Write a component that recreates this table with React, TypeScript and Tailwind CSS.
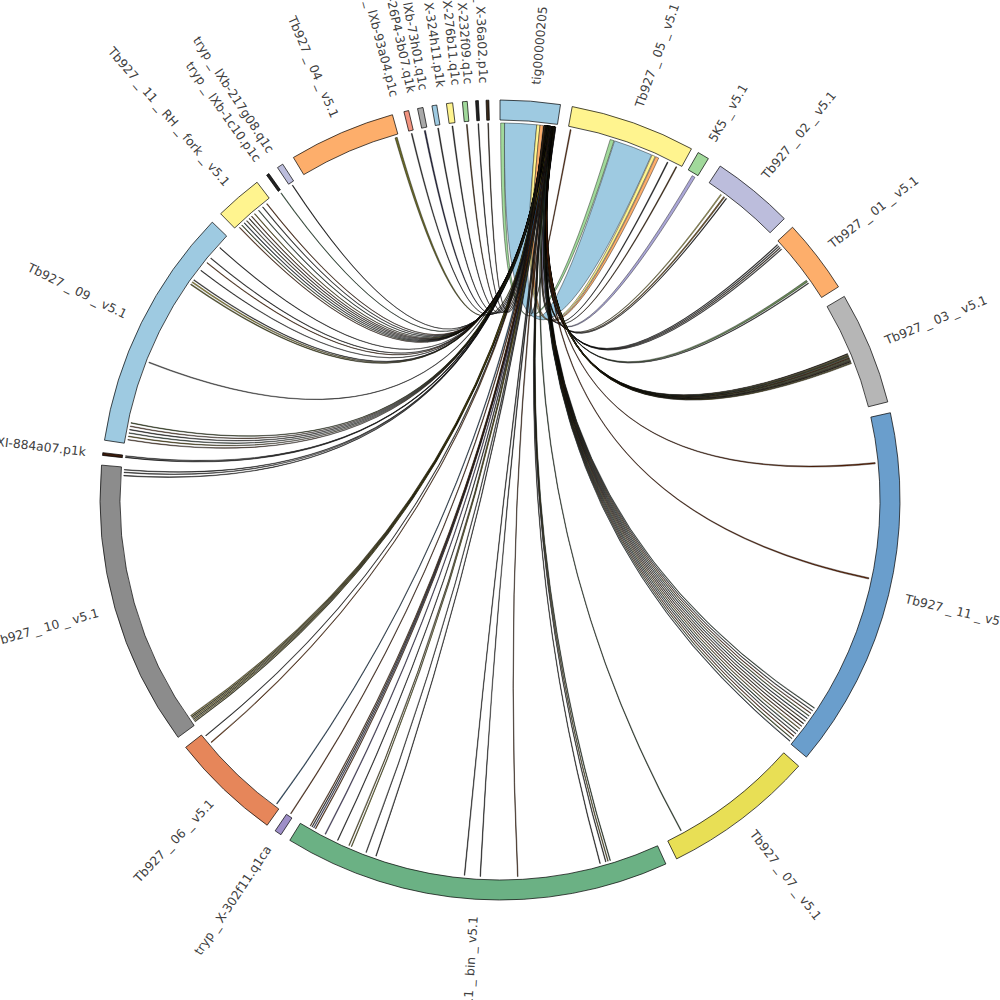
import React from "react";

const CX = 500;
const CY = 500;
const RI = 380;
const RO = 400;
const RL = 377;
const RT = 417;

const rad = (d: number) => (d * Math.PI) / 180;
const pt = (a: number, r: number): string => {
  const x = CX + r * Math.sin(rad(a));
  const y = CY - r * Math.cos(rad(a));
  return `${x.toFixed(2)},${y.toFixed(2)}`;
};

function sector(a1: number, a2: number): string {
  const large = a2 - a1 > 180 ? 1 : 0;
  return `M${pt(a1, RO)} A${RO},${RO} 0 ${large} 1 ${pt(a2, RO)} L${pt(a2, RI)} A${RI},${RI} 0 ${large} 0 ${pt(a1, RI)} Z`;
}

function ribbon(a1: number, a2: number, b1: number, b2: number): string {
  return `M${pt(a1, RL)} A${RL},${RL} 0 0 1 ${pt(a2, RL)} Q${CX},${CY} ${pt(b1, RL)} A${RL},${RL} 0 0 1 ${pt(b2, RL)} Q${CX},${CY} ${pt(a1, RL)} Z`;
}

type Seg = { n: string; a: [number, number]; c: string; la?: number };

const segs: Seg[] = [
  { n: "tig00000205", a: [0, 8.7], c: "#9ecae1", la: 5.0 },
  { n: "Tb927 _ 05 _ v5.1", a: [10.4, 28.6], c: "#fff48f" },
  { n: "5K5 _ v5.1", a: [29.7, 31.4], c: "#a1d99b" },
  { n: "Tb927 _ 02 _ v5.1", a: [33.4, 45.3], c: "#bcbddc" },
  { n: "Tb927 _ 01 _ v5.1", a: [47.0, 57.8], c: "#fdae6b" },
  { n: "Tb927 _ 03 _ v5.1", a: [59.4, 75.8], c: "#b6b6b6" },
  { n: "Tb927 _ 11 _ v5.1", a: [77.4, 130.0], c: "#6a9ecc" },
  { n: "Tb927 _ 07 _ v5.1", a: [131.7, 153.8], c: "#e8df55" },
  { n: "Tb927 _ 11 _ bin _ v5.1", a: [155.5, 211.7], c: "#6bb184" },
  { n: "tryp _ X-302f11.q1ca", a: [213.2, 214.2], c: "#9e8fc8" },
  { n: "Tb927 _ 06 _ v5.1", a: [215.6, 231.8], c: "#e6865a" },
  { n: "Tb927 _ 10 _ v5.1", a: [233.6, 275.0], c: "#8c8c8c" },
  { n: "tryp _ XI-884a07.p1k", a: [276.4, 276.8], c: "#3a1a0a" },
  { n: "Tb927 _ 09 _ v5.1", a: [278.6, 314.0], c: "#9ecae1" },
  { n: "Tb927 _ 11 _ RH _ fork _ v5.1", a: [315.7, 322.6], c: "#fff48f" },
  { n: "tryp _ lXb-1c10.p1c", a: [324.3, 324.7], c: "#222222" },
  { n: "tryp _ lXb-217g08.q1c", a: [326.2, 327.1], c: "#bcbddc" },
  { n: "Tb927 _ 04 _ v5.1", a: [328.9, 344.4], c: "#fdae6b" },
  { n: "tryp _ lXb-93a04.p1c", a: [346.1, 346.8], c: "#f29480", la: 345.3 },
  { n: "tryp _ X-26P4-3b07.q1k", a: [348.1, 348.9], c: "#a8a8a8", la: 347.7 },
  { n: "tryp _ lXb-73h01.q1c", a: [350.2, 350.9], c: "#9ecae1", la: 349.4 },
  { n: "tryp _ X-324h11.p1k", a: [352.3, 353.2], c: "#fff48f", la: 351.8 },
  { n: "tryp _ X-276b11.q1c", a: [354.6, 355.3], c: "#a1d99b", la: 353.9 },
  { n: "tryp _ X-232f09.q1c", a: [356.5, 356.9], c: "#222222", la: 355.6 },
  { n: "tryp _ X-36a02.p1c", a: [358.0, 358.4], c: "#3a2a1a", la: 357.7 },
];

const pal = ["#3a2a1a", "#6b3a1a", "#8a7a2a", "#2e4e3a", "#4a4a4a", "#7a3a14", "#556b2f", "#2a3a4a", "#5a4a2a"];

const thin: [number, number, string][] = [
  [10.8, 0.15, "#7a3a14"],
  [26.4, 0.15, "#333333"],
  [27.9, 0.15, "#5a3a1a"],
  [30.9, 0.5, "#aaa6d6"],
  [35.9, 0.15, "#c4bc6a"],
  [36.5, 0.2, "#7a5a2a"],
  [36.9, 0.12, "#2a2a2a"],
  [47.4, 0.12, "#2a2a2a"],
  [47.7, 0.12, "#3a3a3a"],
  [48.0, 0.12, "#4a3a2a"],
  [48.3, 0.12, "#555555"],
  [54.5, 0.3, "#6b8e5a"],
  [54.9, 0.12, "#333333"],
  [84.4, 0.2, "#6b2a0a"],
  [102.0, 0.2, "#6b2a0a"],
  [151.3, 0.12, "#3d5a3d"],
  [163.0, 0.1, "#2e4e2e"],
  [163.35, 0.1, "#8a7a2a"],
  [163.7, 0.1, "#333333"],
  [164.6, 0.1, "#2a2a2a"],
  [177.3, 0.1, "#6b3a1a"],
  [183.0, 0.1, "#2a2a2a"],
  [185.4, 0.1, "#333333"],
  [199.2, 0.1, "#333333"],
  [200.8, 0.1, "#555555"],
  [203.2, 0.1, "#8a8a2a"],
  [203.6, 0.1, "#8a7a2a"],
  [205.5, 0.1, "#333333"],
  [207.6, 0.12, "#6a5a9a"],
  [209.3, 0.1, "#8b4513"],
  [209.6, 0.1, "#5a5a9a"],
  [209.9, 0.1, "#333333"],
  [210.2, 0.1, "#8b4513"],
  [213.7, 0.12, "#7a3a14"],
  [216.3, 0.12, "#2f5f8a"],
  [230.0, 0.12, "#8b4513"],
  [231.3, 0.1, "#333333"],
  [273.7, 0.1, "#333333"],
  [274.2, 0.1, "#555555"],
  [274.6, 0.1, "#2a2a2a"],
  [276.5, 0.1, "#333333"],
  [276.7, 0.1, "#2a2a2a"],
  [291.4, 0.12, "#777777"],
  [304.9, 0.15, "#6b6b2a"],
  [305.3, 0.15, "#b8a830"],
  [305.7, 0.12, "#333333"],
  [307.5, 0.1, "#333333"],
  [309.0, 0.1, "#8b4513"],
  [309.9, 0.1, "#333333"],
  [312.0, 0.1, "#2a2a2a"],
  [324.5, 0.1, "#2e6e3e"],
  [326.6, 0.1, "#2a2a2a"],
  [344.0, 0.35, "#6b6b2a"],
  [346.45, 0.15, "#333333"],
  [348.5, 0.2, "#2a2a4a"],
  [350.55, 0.15, "#333333"],
  [352.75, 0.15, "#333333"],
  [354.95, 0.15, "#5a3a1a"],
  [356.7, 0.12, "#2a2a2a"],
  [358.2, 0.12, "#3a2a1a"],
];

for (let i = 0; i < 12; i++) thin.push([67.2 + i * 0.14, 0.1, i % 3 === 1 ? "#9a9a6a" : pal[i % pal.length]]);
for (let i = 0; i < 14; i++) thin.push([123.5 + i * 0.48, 0.1, pal[(i + 3) % pal.length]]);
for (let i = 0; i < 6; i++) thin.push([234.0 + i * 0.22, 0.1, i % 2 ? "#9a8a2a" : "#4a4a1a"]);
for (let i = 0; i < 6; i++) thin.push([279.2 + i * 0.52, 0.1, pal[(i + 1) % pal.length]]);
const rh = [316.3, 316.8, 317.3, 317.8, 318.3, 318.8, 319.4, 320.2, 321.0, 321.8];
rh.forEach((b, i) => thin.push([b, 0.1, pal[(i + 5) % pal.length]]));

const sorted = [...thin].sort((p, q) => ((p[0] - 8.7 + 360) % 360) - ((q[0] - 8.7 + 360) % 360));
const N = sorted.length;
const links = sorted.map((l, i) => {
  const a = 8.4 - (i * 1.6) / (N - 1);
  const wa = l[1] > 0.3 ? 0.3 : 0.2;
  return { d: ribbon(a - wa / 2, a + wa / 2, l[0] - l[1] / 2, l[0] + l[1] / 2), c: l[2] };
});

const big = [
  { d: ribbon(0.1, 0.7, 17.0, 17.6), c: "#a1d99b" },
  { d: ribbon(0.7, 5.6, 17.7, 23.7), c: "#9ecae1" },
  { d: ribbon(5.6, 6.1, 23.8, 24.3), c: "#fff48f" },
  { d: ribbon(6.1, 6.6, 24.4, 24.9), c: "#fdae6b" },
];

function Label({ a, text }: { a: number; text: string }) {
  const norm = ((a % 360) + 360) % 360;
  const right = norm < 180;
  const x = CX + RT * Math.sin(rad(norm));
  const y = CY - RT * Math.cos(rad(norm));
  const rot = right ? norm - 90 : norm - 270;
  return (
    <text
      x={x}
      y={y}
      transform={`rotate(${rot.toFixed(2)} ${x.toFixed(2)} ${y.toFixed(2)})`}
      textAnchor={right ? "start" : "end"}
      dominantBaseline="central"
      fontSize={12.3}
      fill="#404040"
      fontFamily="'DejaVu Sans', sans-serif"
    >
      {text}
    </text>
  );
}

export default function App() {
  return (
    <div className="w-[1000px] h-[1000px] bg-white overflow-hidden">
      <svg width="1000" height="1000" viewBox="0 0 1000 1000" className="block">
        <g stroke="#000" strokeWidth={0.4} strokeLinejoin="round">
          {big.map((l, i) => (
            <path key={"b" + i} d={l.d} fill={l.c} />
          ))}
          {links.map((l, i) => (
            <path key={"l" + i} d={l.d} fill={l.c} />
          ))}
        </g>
        <g stroke="#000" strokeWidth={0.7}>
          {segs.map((s) => (
            <path key={s.n} d={sector(s.a[0], s.a[1])} fill={s.c} />
          ))}
        </g>
        {segs.map((s) => (
          <Label key={"t" + s.n} a={s.la ?? (s.a[0] + s.a[1]) / 2} text={s.n} />
        ))}
      </svg>
    </div>
  );
}
